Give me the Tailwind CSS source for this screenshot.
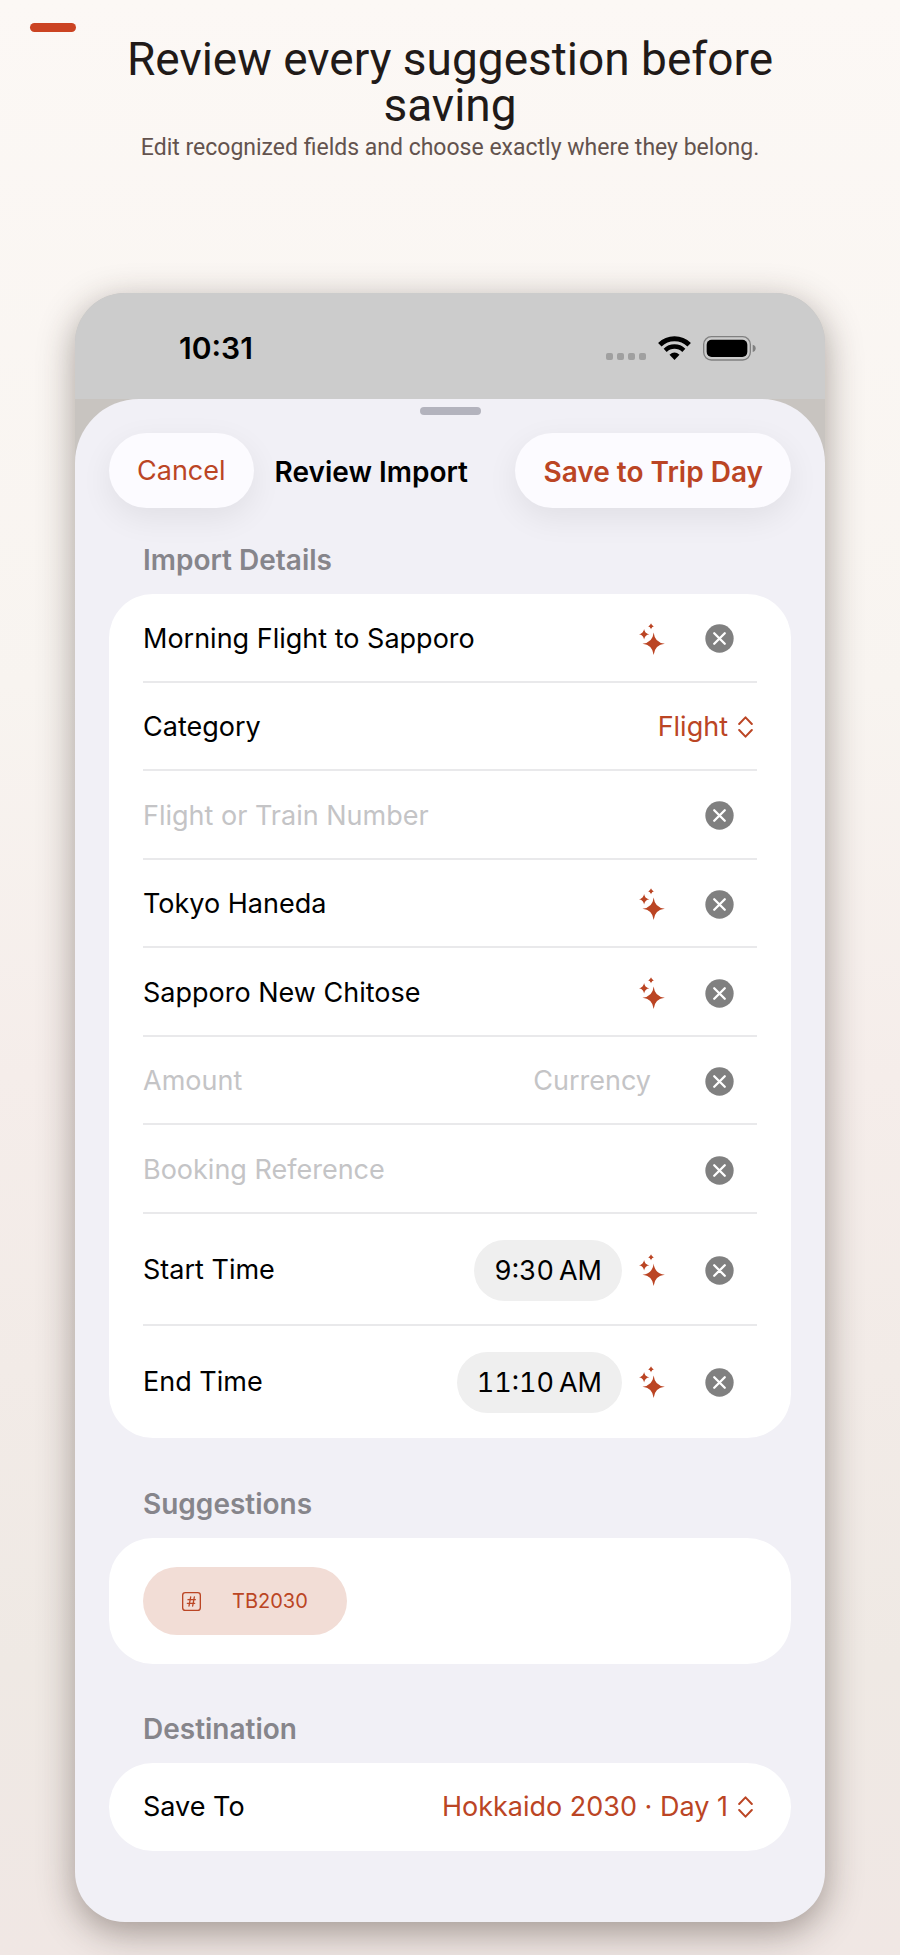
<!DOCTYPE html>
<html lang="en">
<head>
  <meta charset="UTF-8" />
  <meta name="viewport" content="width=device-width, initial-scale=1.0"/>
  <title>Review Import</title>
  <script src="https://cdn.jsdelivr.net/npm/@tailwindcss/browser@4"></script>
</head>
<body class="min-h-screen bg-[linear-gradient(#fcf8f5,#f8f4f0_35%,#f5edea_55%,#efe9e4_85%,#f0e7e4)] font-['Inter',sans-serif] text-black pb-8">

  <!-- Shared icons -->
  <svg class="hidden" xmlns="http://www.w3.org/2000/svg">
    <symbol id="sparkles" viewBox="0 0 78 97">
      <path d="M44 29Q47 60 78 63Q47 66 44 97Q41 66 10 63Q41 60 44 29Z"/>
      <path d="M15 18Q17 32 31 34Q17 36 15 50Q13 36 -1 34Q13 32 15 18Z"/>
      <path d="M36 0Q37 9 46 10Q37 11 36 20Q35 11 26 10Q35 9 36 0Z"/>
      <path d="M44 38L51 56L69 63L51 70L44 88L37 70L19 63L37 56Z"/>
      <path d="M15 23L19 30L26 34L19 38L15 45L11 38L4 34L11 30Z"/>
      <path d="M36 3L39 7L43 10L39 13L36 17L33 13L29 10L33 7Z"/>
    </symbol>
    <symbol id="clear" viewBox="0 0 88 88">
      <circle cx="44" cy="44" r="43" fill="#808080"/>
      <path d="M28 28L60 60M60 28L28 60" fill="none" stroke="#fff" stroke-width="7" stroke-linecap="round"/>
    </symbol>
    <symbol id="updown" viewBox="0 0 44 66">
      <path d="M3 24L22 4L41 24M3 42L22 62L41 42" fill="none" stroke="currentColor" stroke-width="6" stroke-linecap="round" stroke-linejoin="round"/>
    </symbol>
  </svg>

  <!-- Headline -->
  <header class="pt-[23px] text-center font-['Roboto',sans-serif]">
    <div class="ml-[30px] h-[9px] w-[46px] rounded-full bg-[#cb4322]"></div>
    <h1 class="mx-auto mt-1 w-4/5 text-[46px] leading-[46px] text-[#211a18]">Review every suggestion before saving</h1>
    <p class="mt-1 text-[23px] leading-8 text-[#63534e]">Edit recognized fields and choose exactly where they belong.</p>
  </header>

  <!-- Phone -->
  <main class="mx-auto mt-[129px] w-5/6 overflow-hidden rounded-[50px] bg-[#c8c4c0] shadow-[0_10px_36px_rgba(50,35,28,0.42)]">

    <!-- Status bar -->
    <div class="flex h-[106px] items-center justify-between bg-[#ccc] pl-[104px] pr-[69px] pt-1">
      <span class="text-[30px] font-semibold leading-10">10:31</span>
      <div class="flex items-center gap-3">
        <div class="flex gap-1 pt-4">
          <span class="size-[7px] rounded-xs bg-[#a0a0a0]"></span>
          <span class="size-[7px] rounded-xs bg-[#a0a0a0]"></span>
          <span class="size-[7px] rounded-xs bg-[#a0a0a0]"></span>
          <span class="size-[7px] rounded-xs bg-[#a0a0a0]"></span>
        </div>
        <svg class="h-6 w-[33px]" viewBox="0 0 98 72" fill="none" stroke="#000">
          <path d="M5 26A63 63 0 0 1 93 26" stroke-width="15"/>
          <path d="M21 43A40 40 0 0 1 77 43" stroke-width="13"/>
          <path d="M49 72L34 56Q49 43 64 56Z" fill="#000" stroke="none"/>
        </svg>
        <svg class="h-[25px] w-[53px]" viewBox="0 0 159 75">
          <rect x="2" y="2" width="140" height="70" rx="23" fill="none" stroke="#808080" stroke-width="4"/>
          <rect x="11" y="11" width="122" height="52" rx="15"/>
          <path d="M149 26Q158 28 158 37Q158 46 149 48Z" fill="#808080"/>
        </svg>
      </div>
    </div>

    <!-- Sheet -->
    <div class="rounded-t-[64px] bg-[#f1f0f6] px-[34px] pb-[71px] pt-2 text-[27px]">
      <div class="mx-auto h-2 w-[61px] rounded-full bg-[#b3b3bd]"></div>

      <div class="mt-[18px] flex h-[75px] items-center whitespace-nowrap">
        <button class="h-full rounded-full bg-[#fcfbff] px-7 pt-[2px] text-[#bb4524] shadow-[0_10px_32px_rgba(0,0,0,0.07)]">Cancel</button>
        <h2 class="ml-[21px] pt-[2px] text-[28px] font-semibold">Review Import</h2>
        <button class="ml-auto h-full rounded-full bg-[#fcfbff] px-7 pt-[2px] text-[28px] font-semibold text-[#bb4524] shadow-[0_10px_32px_rgba(0,0,0,0.07)]">Save to Trip Day</button>
      </div>

      <h3 class="mb-[14px] mt-8 pl-[34px] text-[28px] font-semibold leading-10 text-[#86858b]">Import Details</h3>
      <section class="rounded-[44px] bg-white px-[34px]">
        <div class="grid min-h-[620px] auto-rows-fr grid-cols-1">
          <div class="flex items-center border-b-2 border-[#e9e9eb] pr-[23px] pt-[3px]">
            <input aria-label="Title" value="Morning Flight to Sapporo" class="min-w-0 flex-1 outline-none"/>
            <svg class="h-8 w-[26px] fill-[#bb4524]"><use href="#sparkles"/></svg>
            <button class="ml-10" aria-label="Clear title"><svg class="size-[29px]"><use href="#clear"/></svg></button>
          </div>
          <div class="flex items-center justify-between border-b-2 border-[#e9e9eb] pr-1 pt-[3px]">
            <label for="category">Category</label>
            <div class="flex items-center gap-[10px] text-[#bb4524]">
              <select id="category" class="field-sizing-content appearance-none outline-none"><option>Flight</option></select>
              <svg class="h-[22px] w-[15px]"><use href="#updown"/></svg>
            </div>
          </div>
          <div class="flex items-center border-b-2 border-[#e9e9eb] pr-[23px] pt-[3px]">
            <input aria-label="Flight or Train Number" placeholder="Flight or Train Number" class="min-w-0 flex-1 outline-none placeholder:text-[#c4c4c6]"/>
            <button class="ml-10" aria-label="Clear number"><svg class="size-[29px]"><use href="#clear"/></svg></button>
          </div>
          <div class="flex items-center border-b-2 border-[#e9e9eb] pr-[23px] pt-[3px]">
            <input aria-label="From" value="Tokyo Haneda" class="min-w-0 flex-1 outline-none"/>
            <svg class="h-8 w-[26px] fill-[#bb4524]"><use href="#sparkles"/></svg>
            <button class="ml-10" aria-label="Clear origin"><svg class="size-[29px]"><use href="#clear"/></svg></button>
          </div>
          <div class="flex items-center border-b-2 border-[#e9e9eb] pr-[23px] pt-[3px]">
            <input aria-label="To" value="Sapporo New Chitose" class="min-w-0 flex-1 outline-none"/>
            <svg class="h-8 w-[26px] fill-[#bb4524]"><use href="#sparkles"/></svg>
            <button class="ml-10" aria-label="Clear arrival"><svg class="size-[29px]"><use href="#clear"/></svg></button>
          </div>
          <div class="flex items-center border-b-2 border-[#e9e9eb] pr-[23px] pt-[3px]">
            <input aria-label="Amount" placeholder="Amount" class="min-w-0 flex-1 outline-none placeholder:text-[#c4c4c6]"/>
            <input aria-label="Currency" placeholder="Currency" class="w-40 text-right outline-none placeholder:text-[#c4c4c6]"/>
            <button class="ml-[54px]" aria-label="Clear amount"><svg class="size-[29px]"><use href="#clear"/></svg></button>
          </div>
          <div class="flex items-center border-b-2 border-[#e9e9eb] pr-[23px] pt-[3px]">
            <input aria-label="Booking Reference" placeholder="Booking Reference" class="min-w-0 flex-1 outline-none placeholder:text-[#c4c4c6]"/>
            <button class="ml-10" aria-label="Clear booking reference"><svg class="size-[29px]"><use href="#clear"/></svg></button>
          </div>
        </div>
        <div class="flex h-28 items-center border-b-2 border-[#e9e9eb] pr-[23px] pt-[2px]">
          <span class="flex-1">Start Time</span>
          <button class="mr-[17px] h-[61px] rounded-full bg-[#efefef] px-5 pt-[2px] tabular-nums">9:30&#8201;AM</button>
          <svg class="h-8 w-[26px] fill-[#bb4524]"><use href="#sparkles"/></svg>
          <button class="ml-10" aria-label="Clear start time"><svg class="size-[29px]"><use href="#clear"/></svg></button>
        </div>
        <div class="flex h-28 items-center pr-[23px]">
          <span class="flex-1">End Time</span>
          <button class="mr-[17px] h-[61px] rounded-full bg-[#efefef] px-5 pt-[2px] tabular-nums">11:10&#8201;AM</button>
          <svg class="h-8 w-[26px] fill-[#bb4524]"><use href="#sparkles"/></svg>
          <button class="ml-10" aria-label="Clear end time"><svg class="size-[29px]"><use href="#clear"/></svg></button>
        </div>
      </section>

      <h3 class="mb-[14px] mt-[46px] pl-[34px] text-[28px] font-semibold leading-10 text-[#86858b]">Suggestions</h3>
      <section class="rounded-[44px] bg-white px-[34px] py-[29px]">
        <button class="flex h-[68px] items-center gap-[31px] rounded-full bg-[#f2ddd6] px-[39px] text-xl text-[#bb4524]">
          <svg class="size-[19px]" viewBox="0 0 57 57" fill="none" stroke="currentColor" stroke-linecap="round">
            <rect x="2" y="2" width="53" height="53" rx="8" stroke-width="4"/>
            <path d="M26 15L21 42M37 15L32 42M18 23H40M16 34H38" stroke-width="4"/>
          </svg>
          TB2030
        </button>
      </section>

      <h3 class="mb-[14px] mt-[45px] pl-[34px] text-[28px] font-semibold leading-10 text-[#86858b]">Destination</h3>
      <section class="flex h-[88px] items-center justify-between rounded-[44px] bg-white pl-[34px] pr-[38px]">
        <label for="save-to">Save To</label>
        <div class="flex items-center gap-[10px] text-[#bb4524]">
          <select id="save-to" class="field-sizing-content appearance-none outline-none"><option>Hokkaido 2030 · Day 1</option></select>
          <svg class="h-[22px] w-[15px]"><use href="#updown"/></svg>
        </div>
      </section>
    </div>
  </main>
</body>
</html>
